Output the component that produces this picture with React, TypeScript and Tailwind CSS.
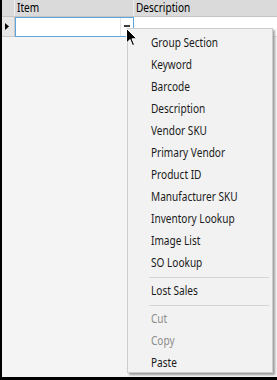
const items = [
  "Group Section",
  "Keyword",
  "Barcode",
  "Description",
  "Vendor SKU",
  "Primary Vendor",
  "Product ID",
  "Manufacturer SKU",
  "Inventory Lookup",
  "Image List",
  "SO Lookup",
];

const Label = ({ children }: { children: React.ReactNode }) => (
  <span className="inline-block origin-left scale-x-[0.84] whitespace-nowrap">{children}</span>
);

const MenuItem = ({ label, disabled }: { label: string; disabled?: boolean }) => (
  <div
    className={`h-[22px] pl-[23px] flex items-center text-[12px] ${
      disabled ? "text-[#8d8d8d]" : "text-[#1b1b1b]"
    }`}
  >
    <Label>{label}</Label>
  </div>
);

const Separator = () => (
  <div className="h-[6px] flex items-center pl-[21px] pr-[3px]">
    <div className="h-px w-full bg-[#d5d5d5]" />
  </div>
);

const App = () => {
  return (
    <div
      className="relative w-[277px] h-[380px] overflow-hidden bg-[#f4f4f4] border-l-2 border-b-[3px] border-black"
      style={{ fontFamily: '"Noto Sans", "Open Sans", sans-serif' }}
    >
      {/* grid header */}
      <div className="flex h-[17px] bg-[#dadada] border-b border-[#c4c4c4] text-[12px] leading-[16px] text-black">
        <div className="w-[13px] border-r border-[#f0f0f0]" />
        <div className="w-[119px] pl-[2px] border-r border-[#f0f0f0]">
          <Label>Item</Label>
        </div>
        <div className="flex-1 pl-[2px]">
          <Label>Description</Label>
        </div>
      </div>

      {/* first row */}
      <div className="flex h-[20px]">
        <div className="w-[13px] bg-[#e6e6e6] border-r border-b border-[#c8c8c8] flex items-center pl-[3px]">
          <svg width="4" height="7" viewBox="0 0 4 7">
            <path d="M0 0 L4 3.5 L0 7 Z" fill="#000" />
          </svg>
        </div>
        <div className="w-[119px] flex border border-[#5ea6e0] bg-white">
          <div className="flex-1 border-r border-[#e4e4e4]" />
          <div className="w-[12px] flex justify-center pt-[7px]">
            <div className="w-[6px] h-[2px] bg-[#3c3c3c]" />
          </div>
        </div>
        <div className="flex-1 bg-white border-b border-[#e0e0e0]" />
      </div>

      {/* context menu */}
      <div className="absolute left-[125px] top-[28px] w-[146px] h-[345px] bg-[#f2f2f2] border border-[#cccccc] shadow-[2px_2px_2px_rgba(0,0,0,0.35)] pt-[3px]">
        {items.map((label) => (
          <MenuItem key={label} label={label} />
        ))}
        <Separator />
        <MenuItem label="Lost Sales" />
        <Separator />
        <MenuItem label="Cut" disabled />
        <MenuItem label="Copy" disabled />
        <MenuItem label="Paste" />
      </div>

      {/* mouse pointer */}
      <svg
        className="absolute left-[124px] top-[28px]"
        width="12"
        height="19"
        viewBox="0 0 12 19"
      >
        <path
          d="M0.5 0.5 L0.5 15 L4 11.5 L6.5 17.5 L8.5 16.6 L6 10.8 L10.8 10.8 Z"
          fill="#000"
          stroke="#fff"
          strokeWidth="1"
          strokeLinejoin="round"
        />
      </svg>
    </div>
  );
};

export default App;
